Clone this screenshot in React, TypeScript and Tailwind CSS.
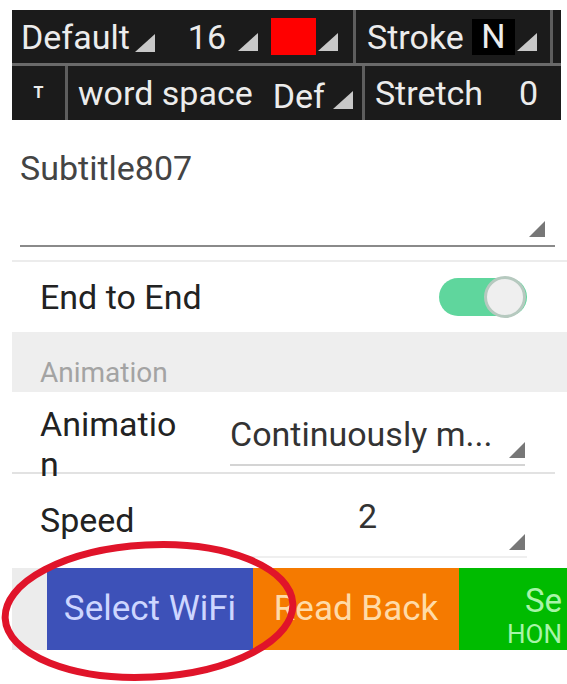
const tri = "inline-block w-0 h-0";

function Tri({ size = "s", color = "border-b-[#c8c8c8]", className = "" }: { size?: "s" | "l"; color?: string; className?: string }) {
  const dims =
    size === "l"
      ? "border-l-[20px] border-l-transparent border-b-[18px]"
      : "border-l-[16px] border-l-transparent border-b-[16px]";
  return <span className={`${tri} ${dims} ${color} ${className}`} />;
}

function Sep() {
  return <div className="w-[3px] self-stretch bg-[#5e5e5e]" />;
}

export default function App() {
  return (
    <div
      className="relative w-[567px] h-[684px] overflow-hidden bg-white text-[#3a3a3a]"
      style={{ fontFamily: "Roboto, 'Noto Sans', sans-serif" }}
    >
      {/* toolbar */}
      <div className="mt-[10px] ml-[12px] mr-[6px] bg-[#1b1b1b] text-[#ececec] text-[34px] leading-none whitespace-nowrap">
        <div className="flex items-center h-[53px]">
          <span className="ml-[9px]">Default</span>
          <Tri size="l" className="ml-[5px] mt-[12px]" />
          <span className="ml-[33px]">16</span>
          <Tri size="l" className="ml-[12px] mt-[10px]" />
          <span className="ml-[13px] w-[45px] h-[37px] bg-[#ff0000]" />
          <Tri size="l" className="ml-[2px] mt-[10px]" />
          <div className="ml-[15px] flex self-stretch"><Sep /></div>
          <span className="ml-[11px]">Stroke</span>
          <span className="ml-[8px] w-[43px] h-[36px] bg-black flex items-end justify-center pb-[2px]">N</span>
          <Tri size="l" className="ml-[2px] mt-[10px]" />
          <div className="ml-[13px] flex self-stretch"><Sep /></div>
        </div>
        <div className="h-[3px] bg-[#6a6a6a]" />
        <div className="flex items-center h-[54px]">
          <span className="w-[53px] text-center text-[16px] font-bold">T</span>
          <Sep />
          <span className="ml-[10px]">word space</span>
          <span className="ml-[20px] mt-[6px]">Def</span>
          <Tri size="l" className="ml-[8px] mt-[14px]" />
          <div className="ml-[9px] flex self-stretch"><Sep /></div>
          <span className="ml-[10px]">Stretch</span>
          <span className="ml-[36px]">0</span>
        </div>
      </div>

      {/* subtitle field */}
      <div className="pl-[20px] pr-[12px] pt-[28px]">
        <div className="text-[34px] leading-[40px] text-[#444]">Subtitle807</div>
        <div className="flex justify-end h-[57px] items-end pr-[10px] pb-[8px]">
          <Tri color="border-b-[#777]" />
        </div>
        <div className="h-[2px] bg-[#8a8a8a]" />
      </div>
      <div className="mt-[13px] ml-[12px] h-[2px] bg-[#ececec]" />

      {/* end to end */}
      <div className="flex items-center justify-between h-[70px] pl-[40px] pr-[40px]">
        <span className="text-[34px] text-[#222]">End to End</span>
        <div className="relative w-[88px] h-[38px] rounded-full bg-[#5fd69d]">
          <div className="absolute right-[1px] top-[-2px] w-[42px] h-[42px] rounded-full bg-[#efefef] border-[3px] border-[#b6c9bf]" />
        </div>
      </div>

      {/* section header */}
      <div className="ml-[12px] h-[60px] bg-[#eeeeee] flex items-end pl-[28px] pb-[5px]">
        <span className="text-[28px] leading-none text-[#a3a3a3]">Animation</span>
      </div>

      {/* animation row */}
      <div className="flex h-[80px] pl-[40px] pr-[42px]">
        <div className="w-[150px] pt-[12px] text-[34px] leading-[40px] text-[#222]">
          Animatio
          <br />n
        </div>
        <div className="ml-[40px] flex-1 flex flex-col justify-end pb-[6px]">
          <div className="flex items-end justify-between">
            <span className="mb-[8px] text-[34px] leading-[44px] text-[#333]">Continuously m...</span>
            <Tri color="border-b-[#777]" className="mb-[6px]" />
          </div>
          <div className="h-[2px] bg-[#d4d4d4]" />
        </div>
      </div>
      <div className="ml-[12px] mr-[12px] h-[2px] bg-[#e2e2e2]" />

      {/* speed row */}
      <div className="flex h-[86px] pl-[40px] pr-[40px]">
        <span className="w-[190px] pt-[26px] text-[34px] leading-[40px] text-[#222]">Speed</span>
        <div className="flex-1 flex flex-col">
          <span className="pt-[22px] pl-[128px] text-[34px] leading-[40px] text-[#333]">2</span>
          <div className="flex justify-end mt-[-2px] pr-[2px]">
            <Tri color="border-b-[#777]" />
          </div>
          <div className="mt-[6px] h-[2px] bg-[#efefef]" />
        </div>
      </div>

      {/* buttons */}
      <div className="mt-[8px] flex h-[82px]">
        <div className="ml-[12px] w-[35px] bg-[#ececec]" />
        <div className="w-[206px] bg-[#3d51b8] flex items-center justify-center text-[35px] text-[#cdd6ff]">Select WiFi</div>
        <div className="w-[206px] bg-[#f57a00] flex items-center justify-center text-[35px] text-[#ffdba8]">Read Back</div>
        <div className="flex-1 bg-[#00bb00] flex flex-col text-[#a8f5a8] whitespace-nowrap">
          <span className="mt-[16px] ml-[66px] text-[33px] leading-[34px]">Se</span>
          <span className="mt-[2px] ml-[48px] text-[26px] leading-[28px]">HON</span>
        </div>
      </div>

      {/* red ellipse annotation */}
      <svg className="absolute left-0 top-[538px]" width="310" height="146" viewBox="0 0 310 146">
        <ellipse cx="149" cy="73" rx="144" ry="66" fill="none" stroke="#e0142a" strokeWidth="7" transform="rotate(-3 149 73)" />
      </svg>
    </div>
  );
}
